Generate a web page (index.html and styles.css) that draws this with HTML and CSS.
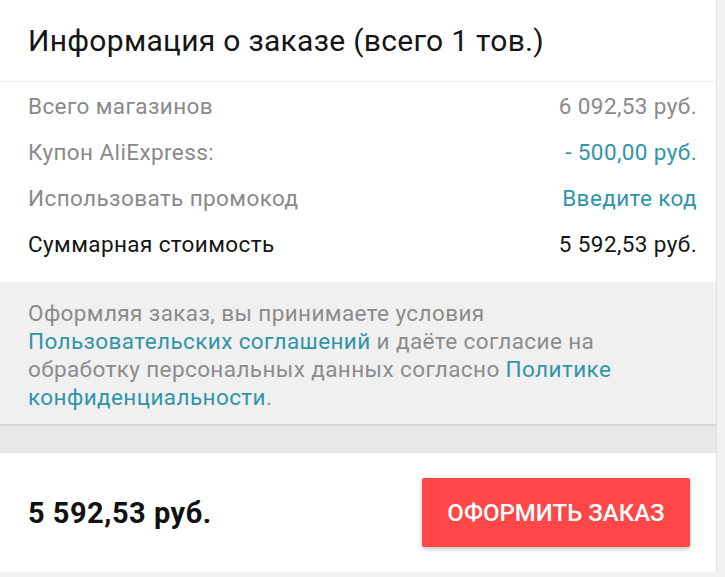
FILE: index.html
```html
<!DOCTYPE html>
<html lang="ru">
<head>
    <meta charset="UTF-8">
    <meta name="viewport" content="width=device-width, initial-scale=1.0">
    <title>Информация о заказе</title>
    <link rel="stylesheet" href="styles.css">
</head>
<body>

    <div class="page">
        <div class="order-header">
            <h1>Информация о заказе (всего 1 тов.)</h1>
        </div>

        <div class="summary">
            <div class="row">
                <span>Всего магазинов</span>
                <span>6 092,53 руб.</span>
            </div>
            <div class="row">
                <span>Купон AliExpress:</span>
                <span class="link">- 500,00 руб.</span>
            </div>
            <div class="row">
                <span>Использовать промокод</span>
                <span class="link">Введите код</span>
            </div>
            <div class="row total">
                <span>Суммарная стоимость</span>
                <span>5 592,53 руб.</span>
            </div>
        </div>

        <div class="terms">
            <p>Оформляя заказ, вы принимаете условия
                <a href="#">Пользовательских соглашений</a> и даёте согласие на
                обработку персональных данных согласно <a href="#">Политике
                конфиденциальности</a>.</p>
        </div>

        <div class="spacer"></div>

        <div class="footer">
            <div class="footer-price">5 592,53 руб.</div>
            <button class="checkout-btn">ОФОРМИТЬ ЗАКАЗ</button>
        </div>
    </div>

</body>
</html>
```

FILE: styles.css
```css
body {
    margin: 0;
    background-color: #f2f2f2;
    font-family: 'Roboto', 'Noto Sans', sans-serif;
    color: #111;
}
.page {
    width: 716px;
    height: 572px;
    border-right: 1px solid #e2e2e2;
    display: flex;
    flex-direction: column;
}
.order-header {
    background: #fff;
    height: 81px;
    border-bottom: 1px solid #eeeeee;
    display: flex;
    align-items: center;
    padding: 0 28px;
}
h1 {
    margin: 0;
    font-size: 30px;
    font-weight: 400;
    letter-spacing: 0.3px;
    color: #151515;
}
.summary {
    background: #fff;
    padding: 1px 19px 15px 28px;
}
.row {
    display: flex;
    justify-content: space-between;
    align-items: center;
    height: 46px;
    font-size: 22.5px;
    letter-spacing: 0.4px;
    color: #8a8a8a;
}
.row .link {
    color: #3195a8;
}
.row.total {
    color: #151515;
}
.terms {
    background: #f0f0f0;
    padding: 17px 44px 13px 28px;
    border-bottom: 2px solid #d6d6d6;
}
.terms p {
    margin: 0;
    font-size: 22.5px;
    letter-spacing: 0.4px;
    line-height: 28px;
    color: #8c8c8c;
}
.terms a {
    color: #3195a8;
    text-decoration: none;
}
.spacer {
    background: #e8e8e8;
    height: 27px;
}
.footer {
    background: #fff;
    flex: 1;
    display: flex;
    justify-content: space-between;
    align-items: center;
    padding: 0 26px 0 28px;
}
.footer-price {
    font-size: 29px;
    font-weight: 700;
    letter-spacing: 0.5px;
    color: #111;
}
.checkout-btn {
    background-color: #ff4747;
    color: #fff;
    border: none;
    border-radius: 2px;
    width: 268px;
    height: 69px;
    font-family: 'Roboto', sans-serif;
    font-size: 24px;
    font-weight: 500;
    box-shadow: 0 2px 4px rgba(0, 0, 0, 0.25);
    cursor: pointer;
}
```
